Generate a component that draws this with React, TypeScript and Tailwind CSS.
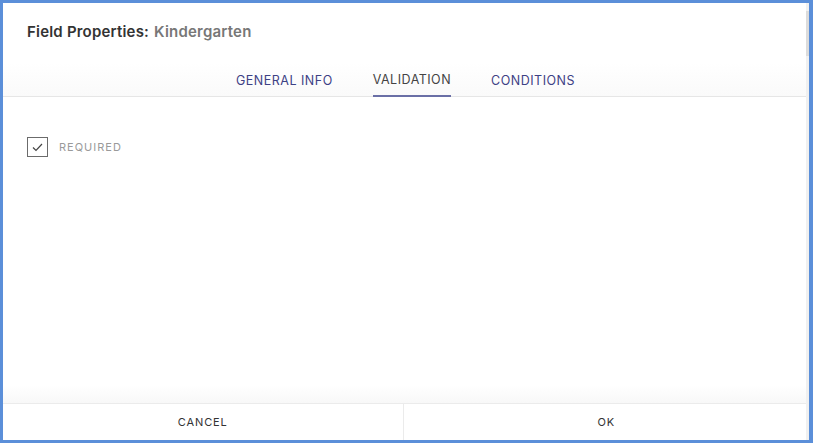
import React from "react";

export default function App() {
  const font = { fontFamily: '"Inter", "Open Sans", sans-serif' };
  return (
    <div
      className="w-[813px] h-[443px] bg-[#5b8fd9] pt-[3px] pl-[3px] pr-[4px] pb-[3px]"
      style={font}
    >
      <div className="w-full h-full bg-white flex">
        <div className="flex-1 flex flex-col">
          <div className="h-[60px] flex items-center pl-[24px] pb-[2px]">
            <span className="text-[15px] font-semibold text-[#333] tracking-[0.2px]">
              Field Properties:
            </span>
            <span className="text-[15px] font-semibold text-[#777] ml-[5px] tracking-[0.2px]">
              Kindergarten
            </span>
          </div>
          <div className="h-[34px] flex justify-center items-stretch gap-[40px] border-b border-[#e6e6e6] bg-gradient-to-b from-white to-[#fafafa] pl-[2px]">
            <div className="flex items-center text-[12.5px] tracking-[0.5px] text-[#3d4185] pt-[3px]">
              GENERAL INFO
            </div>
            <div className="flex items-center text-[12.5px] tracking-[0.5px] text-[#444] border-b-2 border-[#6a6fa6] mb-[-1px] pt-[3px]">
              VALIDATION
            </div>
            <div className="flex items-center text-[12.5px] tracking-[0.5px] text-[#3d4185] pt-[3px]">
              CONDITIONS
            </div>
          </div>
          <div className="flex-1 pt-[40px] pl-[24px]">
            <div className="flex items-center gap-[11px]">
              <div className="w-[21px] h-[20px] border border-[#6b6b6b] flex items-center justify-center">
                <svg width="11" height="9" viewBox="0 0 11 9" fill="none">
                  <path d="M1 4.5 L4 7.5 L10 1" stroke="#444" strokeWidth="1.2" />
                </svg>
              </div>
              <span className="text-[11px] tracking-[1px] text-[#9a9a9a]">REQUIRED</span>
            </div>
          </div>
          <div className="h-[18px] bg-gradient-to-b from-white to-[#f8f8f8]" />
          <div className="h-[37px] flex border-t border-[#ebebeb]">
            <div className="flex-1 flex items-center justify-center text-[11px] tracking-[0.9px] text-[#333] border-r border-[#ebebeb]">
              CANCEL
            </div>
            <div className="flex-1 flex items-center justify-center text-[11px] tracking-[0.9px] text-[#333] pl-[3px]">
              OK
            </div>
          </div>
        </div>
        <div className="w-[3px] bg-[#f0f0f0] flex flex-col">
          <div className="h-[45px] bg-[#dcdcdc] mt-[8px]" />
        </div>
      </div>
    </div>
  );
}
